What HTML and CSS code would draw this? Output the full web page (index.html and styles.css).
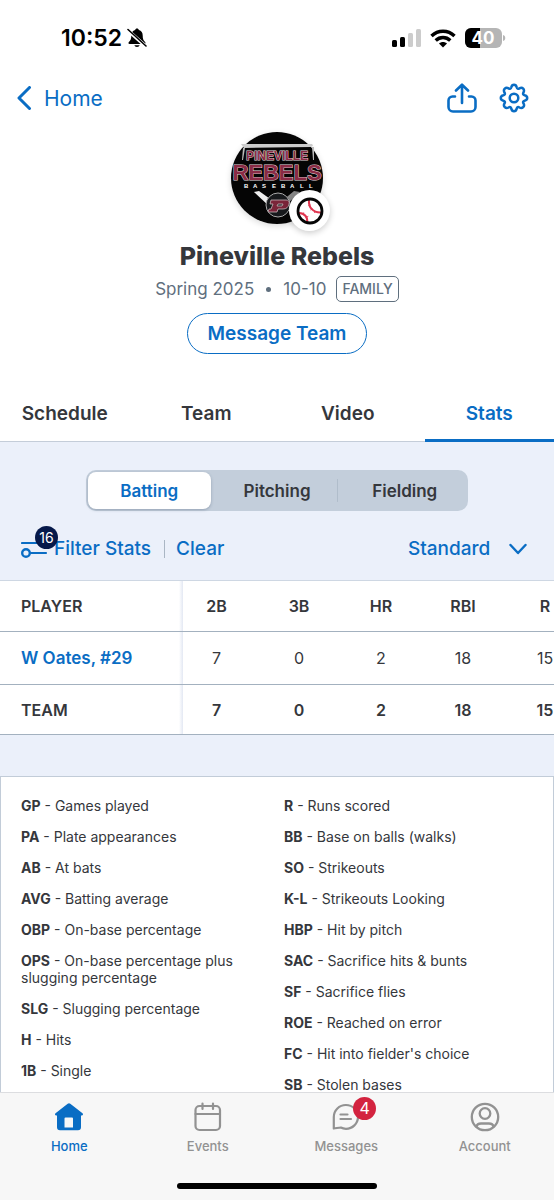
FILE: index.html
```
<!DOCTYPE html>
<html lang="en">
<head>
<meta charset="utf-8">
<meta name="viewport" content="width=device-width, initial-scale=1">
<title>Pineville Rebels - Stats</title>
<link rel="stylesheet" href="styles.css">
</head>
<body>
<div class="status-bar">
  <div class="status-left">
    <span class="clock">10:52</span>
    <svg class="bell" width="20" height="22" viewBox="0 0 20 22" aria-hidden="true">
      <path d="M10 1.500c-1 0-1.700.6-1.900 1.500C5.600 3.800 4.300 5.800 4.300 8.500c0 3.500-.7 4.900-2.400 6.600-.9 1-.4 2 .8 2h14.600c1.200 0 1.700-1 .8-2-1.700-1.700-2.400-3.100-2.400-6.600 0-2.700-1.300-4.700-3.800-5.500C11.700 2.100 11 1.500 10 1.500zM7.300 18.200a2.800 2.400 0 0 0 5.400 0z" fill="#000"/>
      <path d="M1 3.500l18 16" stroke="#fff" stroke-width="3.400"/>
      <path d="M1 2.500l18 16.500" stroke="#000" stroke-width="1.600" stroke-linecap="round"/>
    </svg>
  </div>
  <div class="status-right">
    <svg width="29" height="19" viewBox="0 0 29 19" aria-hidden="true">
      <rect x="0" y="11" width="5" height="7" rx="1.500" fill="#000"/>
      <rect x="8" y="8" width="5" height="10" rx="1.500" fill="#000"/>
      <rect x="16" y="4" width="5" height="14" rx="1.500" fill="#ccc"/>
      <rect x="24" y="0" width="5" height="18" rx="1.500" fill="#ccc"/>
    </svg>
    <svg width="26" height="19" viewBox="0 0 26 19" fill="none" stroke="#000" stroke-width="3.400" aria-hidden="true">
      <path d="M1.500 7C8 .6 18 .6 24.500 7"/>
      <path d="M5.700 11.500c4.200-4 10.400-4 14.600 0"/>
      <path d="M13 18.500l-4-4c2.400-2 5.600-2 8 0z" fill="#000" stroke="none"/>
    </svg>
    <svg width="41" height="20" viewBox="0 0 41 20" role="img" aria-label="Battery 40 percent">
      <rect x="0" y="0" width="37" height="20" rx="6" fill="#b5b5b5"/>
      <path d="M15 0H6a6 6 0 0 0-6 6v8a6 6 0 0 0 6 6h9z" fill="#000"/>
      <path d="M38 7c3 .6 3 5.400 0 6z" fill="#b5b5b5"/>
      <text class="battery-text" x="18" y="16" text-anchor="middle">40</text>
    </svg>
  </div>
</div>

<header class="nav-bar">
  <a class="back" href="#">
    <svg width="16" height="24" viewBox="0 0 16 24" fill="none" stroke="currentColor" stroke-width="3" stroke-linecap="round" stroke-linejoin="round" aria-hidden="true"><path d="M13.500 1.500L3 12l10.500 10.500"/></svg>
    Home
  </a>
  <div class="nav-actions">
    <button class="icon-button" type="button" aria-label="Share">
      <svg width="30" height="30" viewBox="0 0 30 30" fill="none" stroke="currentColor" stroke-width="2.600" stroke-linecap="round" stroke-linejoin="round" aria-hidden="true">
        <path d="M8 13.500H5.500a4 4 0 0 0-4 4v6.500a4.500 4.500 0 0 0 4.500 4.500h18a4.500 4.500 0 0 0 4.500-4.500v-6.500a4 4 0 0 0-4-4H22"/>
        <path d="M15 20V2M9 7.500L15 1.700l6 5.800"/>
      </svg>
    </button>
    <button class="icon-button" type="button" aria-label="Settings">
      <svg width="30" height="30" viewBox="0 0 30 30" fill="none" stroke="currentColor" stroke-width="2.500" stroke-linejoin="round" aria-hidden="true">
        <circle cx="15" cy="15" r="4.300"/>
        <path d="M15 1.800c1.800 0 2.400 1.200 2.700 2.500.4 1.500 1.400 1.900 2.700 1.100 1.200-.7 2.600-1 3.800.3s.9 2.600.3 3.800c-.8 1.300-.4 2.300 1.100 2.700 1.300.3 2.600.9 2.600 2.800s-1.300 2.400-2.600 2.700c-1.500.4-1.900 1.400-1.100 2.700.7 1.200 1 2.500-.3 3.800s-2.600 1-3.800.3c-1.300-.8-2.300-.4-2.700 1.100-.3 1.300-.9 2.600-2.700 2.600s-2.400-1.300-2.700-2.600c-.4-1.500-1.400-1.900-2.700-1.100-1.200.7-2.500 1-3.800-.3s-1-2.600-.3-3.800c.8-1.300.4-2.300-1.100-2.700-1.300-.3-2.600-.9-2.600-2.700s1.300-2.500 2.600-2.800c1.500-.4 1.900-1.400 1.100-2.700-.7-1.200-1-2.500.3-3.800s2.600-1 3.800-.3c1.300.8 2.300.4 2.700-1.100.3-1.300.9-2.500 2.700-2.500z"/>
      </svg>
    </button>
  </div>
</header>

<main class="content">
  <section class="team">
    <div class="crest">
      <svg width="92" height="92" viewBox="0 0 92 92" role="img" aria-label="Team logo">
        <circle cx="46" cy="46" r="46" fill="#050505"/>
        <path d="M10 12h71l1 1.500-2 1.500-67 1z" fill="#ccc"/>
        <path d="M12 16h2l-2 12h-1zM81 15h2v13h-1z" fill="#bbb"/>
        <text class="crest-name" x="46" y="28" text-anchor="middle">PINEVILLE</text>
        <text class="crest-mascot" x="46" y="48" text-anchor="middle">REBELS</text>
        <text class="crest-sport" x="13 22 31 41 50 59 69 78" y="56">BASEBALL</text>
        <path d="M23 60l5-1 14 10-3 6z" fill="#eee"/>
        <path d="M69 60l-6-1-12 10 3 5z" fill="#888"/>
        <circle cx="47" cy="73" r="12" fill="#17191c" stroke="#aaa" stroke-width="1"/>
        <path d="M40 68h15q4 0 3 4-1 5-6 5h-5l-1 3h-9l1-3h2l2-5h-3zM47 72h5l-1 2h-5z" fill="#7a2439" stroke="#c4b4b8" stroke-width=".8" fill-rule="evenodd"/>
      </svg>
      <span class="sport-badge">
        <svg width="28" height="28" viewBox="0 0 28 28" fill="none" aria-label="Baseball" role="img">
          <circle cx="14" cy="14" r="12" fill="#fff"/>
          <g stroke="#e0354f">
            <path d="M13 3c-.8 7.500 4.200 12.800 12 12.500M3 16c5.500.2 8.800 4 8.200 9.500" stroke-width="2"/>
            <path d="M12.500 8.500l2.200-.5M14.500 13l2-1.500M18.500 16l1-2M6.500 17.300l1.200-1.800M10.300 20.500l2-1.200" stroke-width="1"/>
          </g>
          <circle cx="14" cy="14" r="12" stroke="#060606" stroke-width="2.800"/>
        </svg>
      </span>
    </div>
    <h1 class="team-name">Pineville Rebels</h1>
    <div class="team-meta">
      <span>Spring 2025</span><span class="dot"></span><span>10-10</span><span class="role">FAMILY</span>
    </div>
    <button class="message-button" type="button">Message Team</button>
  </section>

  <nav class="tabs" aria-label="Team sections">
    <a class="tab" href="#">Schedule</a>
    <a class="tab" href="#">Team</a>
    <a class="tab" href="#">Video</a>
    <a class="tab tab-active" href="#" aria-current="page">Stats</a>
  </nav>

  <section class="stats">
    <div class="segments">
      <button class="segment segment-active" type="button" aria-pressed="true">Batting</button>
      <button class="segment segment-divided" type="button" aria-pressed="false">Pitching</button>
      <button class="segment" type="button" aria-pressed="false">Fielding</button>
    </div>

    <div class="filters">
      <button class="text-button filter-button" type="button">
        <svg width="33" height="18" viewBox="0 0 33 18" fill="none" stroke="currentColor" stroke-width="2.200" stroke-linecap="round" aria-hidden="true">
          <path d="M1 3h31M10 13h15"/><circle cx="5" cy="13" r="3.800" stroke-width="2.400"/>
        </svg>
        Filter Stats
        <span class="filter-count">16</span>
      </button>
      <span class="separator"></span>
      <button class="text-button" type="button">Clear</button>
      <div class="view-picker">
        <select class="view-select" aria-label="Stat view"><option>Standard</option></select>
        <svg class="chevron" width="18" height="12" viewBox="0 0 18 12" fill="none" stroke="currentColor" stroke-width="2.400" stroke-linecap="round" stroke-linejoin="round" aria-hidden="true"><path d="M1.500 2L9 10l7.500-8"/></svg>
      </div>
    </div>

    <div class="table-scroll">
      <table class="stat-table">
        <thead>
          <tr><th class="player" scope="col">PLAYER</th><th class="first" scope="col">2B</th><th scope="col">3B</th><th scope="col">HR</th><th scope="col">RBI</th><th scope="col">R</th></tr>
        </thead>
        <tbody>
          <tr><th class="player" scope="row"><a class="player-link" href="#">W Oates, #29</a></th><td class="first">7</td><td>0</td><td>2</td><td>18</td><td>15</td></tr>
        </tbody>
        <tfoot>
          <tr><th class="player" scope="row">TEAM</th><td class="first">7</td><td>0</td><td>2</td><td>18</td><td>15</td></tr>
        </tfoot>
      </table>
    </div>

    <div class="legend">
      <ul class="legend-column">
        <li><b>GP</b> - Games played</li>
        <li><b>PA</b> - Plate appearances</li>
        <li><b>AB</b> - At bats</li>
        <li><b>AVG</b> - Batting average</li>
        <li><b>OBP</b> - On-base percentage</li>
        <li><b>OPS</b> - On-base percentage plus slugging percentage</li>
        <li><b>SLG</b> - Slugging percentage</li>
        <li><b>H</b> - Hits</li>
        <li><b>1B</b> - Single</li>
      </ul>
      <ul class="legend-column">
        <li><b>R</b> - Runs scored</li>
        <li><b>BB</b> - Base on balls (walks)</li>
        <li><b>SO</b> - Strikeouts</li>
        <li><b>K-L</b> - Strikeouts Looking</li>
        <li><b>HBP</b> - Hit by pitch</li>
        <li><b>SAC</b> - Sacrifice hits &amp; bunts</li>
        <li><b>SF</b> - Sacrifice flies</li>
        <li><b>ROE</b> - Reached on error</li>
        <li><b>FC</b> - Hit into fielder's choice</li>
        <li><b>SB</b> - Stolen bases</li>
      </ul>
    </div>
  </section>
</main>

<footer class="app-bar">
  <nav class="app-tabs" aria-label="Main">
    <a class="app-tab app-tab-active" href="#" aria-current="page">
      <svg width="30" height="30" viewBox="0 0 30 30" fill="currentColor" aria-hidden="true"><path fill-rule="evenodd" d="M13.700 1.700a2 2 0 0 1 2.600 0l12.200 9.600c1 .9.500 2.200-.8 2.200H27v11.700a3 3 0 0 1-3 3H6a3 3 0 0 1-3-3V13.500h-.7c-1.300 0-1.800-1.300-.8-2.200zM11.500 15.500a1 1 0 0 0-1 1v9h8.500v-9a1 1 0 0 0-1-1z"/></svg>
      Home
    </a>
    <a class="app-tab" href="#">
      <svg width="30" height="30" viewBox="0 0 30 30" fill="none" stroke="currentColor" stroke-width="2.200" stroke-linecap="round" aria-hidden="true"><rect x="2.500" y="4" width="24.500" height="24" rx="4"/><path d="M2.500 12H27M9.500 1.500V7M20 1.500V7"/></svg>
      Events
    </a>
    <a class="app-tab" href="#">
      <span class="icon-wrap">
        <svg width="30" height="30" viewBox="0 0 30 30" fill="none" stroke="currentColor" stroke-width="2.200" stroke-linecap="round" stroke-linejoin="round" aria-hidden="true"><path d="M2.800 26.500V15A12 12 0 0 1 15 3a12 12 0 0 1 12 12 12 12 0 0 1-12 11.800c-2.200 0-3.600-.4-5.200-1.300-2.300.2-4.500.7-7 1z"/><path d="M9.500 12.500h7M9.500 17h10.500"/></svg>
        <span class="unread">4</span>
      </span>
      Messages
    </a>
    <a class="app-tab" href="#">
      <svg width="30" height="30" viewBox="0 0 30 30" fill="none" stroke="currentColor" stroke-width="2.300" stroke-linecap="round" aria-hidden="true"><circle cx="15" cy="15" r="13.200"/><circle cx="15" cy="11.500" r="5.300"/><path d="M6.500 24.500c.5-2.500 1.800-3 4.500-3h8c2.700 0 4 .5 4.500 3"/></svg>
      Account
    </a>
  </nav>
  <div class="home-indicator"></div>
</footer>
</body>
</html>
```
FILE: styles.css
```
:root {
  --blue: #0a6dc4;
  --ink: #35373c;
  --slate: #5f6f7e;
  --pale: #ebf0fa;
  --line: #a3b1bf;
}

* {
  box-sizing: border-box;
}

body {
  margin: 0;
  height: 100vh;
  display: flex;
  flex-direction: column;
  background: #fff;
  color: var(--ink);
  font-family: Inter, "Liberation Sans", sans-serif;
  font-size: 16px;
}

a {
  color: inherit;
  text-decoration: none;
}

button,
select {
  margin: 0;
  padding: 0;
  border: 0;
  background: none;
  color: inherit;
  font: inherit;
}

svg {
  display: block;
  flex: none;
}

.status-bar {
  display: flex;
  justify-content: space-between;
  align-items: center;
  height: 76px;
  padding: 0 48px 0 61px;
  color: #000;
}

.status-left {
  display: flex;
  align-items: center;
  gap: 5px;
}

.clock {
  font-size: 23px;
  font-weight: 600;
}

.status-right {
  display: flex;
  align-items: center;
  gap: 9px;
}

.battery-text {
  fill: #fff;
  font-size: 17px;
  font-weight: 700;
}

.nav-bar {
  display: flex;
  justify-content: space-between;
  align-items: center;
  height: 44px;
  padding: 0 25px 0 16px;
  color: var(--blue);
}

.back {
  display: flex;
  align-items: center;
  gap: 12px;
  font-size: 21px;
}

.nav-actions {
  display: flex;
  gap: 22px;
}

.content {
  flex: 1;
  min-height: 0;
  overflow: hidden;
}

.team {
  display: flex;
  flex-direction: column;
  align-items: center;
  padding: 12px 20px 31px;
}

.crest {
  position: relative;
  border-radius: 50%;
  box-shadow: 0 2px 6px rgba(0, 0, 0, 0.15);
}

.crest-name,
.crest-mascot {
  fill: #8a2b45;
  stroke: #e3d6da;
  stroke-width: 1px;
  paint-order: stroke;
  font-family: "Liberation Sans", sans-serif;
  font-weight: 700;
}

.crest-name {
  font-size: 12px;
}

.crest-mascot {
  font-size: 22px;
}

.crest-sport {
  fill: #fff;
  font-family: "Liberation Sans", sans-serif;
  font-size: 6px;
  font-weight: 700;
}

.sport-badge {
  position: absolute;
  right: -7px;
  bottom: -7px;
  display: flex;
  justify-content: center;
  align-items: center;
  width: 41px;
  height: 41px;
  border-radius: 50%;
  background: #fff;
  box-shadow: 0 2px 6px rgba(0, 0, 0, 0.2);
}

.team-name {
  margin: 16px 0 0;
  font-size: 25px;
  font-weight: 800;
  line-height: 32px;
}

.team-meta {
  display: flex;
  align-items: center;
  margin-top: 4px;
  color: var(--slate);
  font-size: 17px;
}

.dot {
  width: 5px;
  height: 5px;
  margin: 0 12px;
  border-radius: 50%;
  background: currentColor;
}

.role {
  margin-left: 10px;
  padding: 0 5px;
  border: 1px solid currentColor;
  border-radius: 5px;
  font-size: 14px;
  font-weight: 500;
  line-height: 24px;
}

.message-button {
  height: 41px;
  margin-top: 11px;
  padding: 0 20px;
  border: 1px solid var(--blue);
  border-radius: 21px;
  color: var(--blue);
  font-size: 19px;
  font-weight: 600;
}

.tabs {
  display: grid;
  grid-template-columns: repeat(4, 1fr);
  gap: 12px;
  height: 57px;
  border-bottom: 1px solid #c4cdd9;
}

.tab {
  display: flex;
  justify-content: center;
  align-items: center;
  margin-bottom: -1px;
  padding-top: 2px;
  border-bottom: 3px solid transparent;
  font-size: 19px;
  font-weight: 600;
}

.tab-active {
  border-color: var(--blue);
  color: var(--blue);
}

.stats {
  display: flex;
  flex-direction: column;
  padding-top: 28px;
  background: var(--pale);
}

.segments {
  align-self: center;
  display: grid;
  grid-template-columns: repeat(3, 1fr);
  gap: 5px;
  width: 69%;
  padding: 2px;
  border-radius: 10px;
  background: #c3cedb;
}

.segment {
  height: 37px;
  border-radius: 8px;
  font-size: 17px;
  font-weight: 600;
}

.segment-active {
  background: #fff;
  color: var(--blue);
  box-shadow: 0 1px 3px rgba(40, 60, 90, 0.3);
}

.segment-divided {
  background: linear-gradient(#b0bdcb, #b0bdcb) right center / 1px 23px no-repeat;
}

.filters {
  display: flex;
  align-items: center;
  height: 69px;
  padding: 6px 27px 0 21px;
  color: var(--blue);
  font-size: 19px;
  font-weight: 500;
}

.text-button {
  white-space: nowrap;
}

.filter-button {
  position: relative;
  display: flex;
  align-items: center;
}

.filter-count {
  position: absolute;
  left: 14px;
  top: -11px;
  width: 23px;
  height: 23px;
  border-radius: 50%;
  background: #06194a;
  color: #fff;
  font-size: 14px;
  font-weight: 400;
  line-height: 23px;
  text-align: center;
}

.separator {
  width: 1px;
  height: 18px;
  margin: 0 11px 0 13px;
  background: #aab6c4;
}

.view-picker {
  position: relative;
  margin-left: auto;
}

.view-select {
  appearance: none;
  padding-right: 36px;
}

.chevron {
  position: absolute;
  right: 0;
  top: 6px;
  pointer-events: none;
}

.table-scroll {
  overflow: hidden;
  border-top: 1px solid #ced7e3;
  background: #fff;
}

.stat-table {
  width: 586px;
  min-width: 100%;
  table-layout: fixed;
  border-collapse: separate;
  border-spacing: 0;
}

.stat-table th,
.stat-table td {
  height: 51px;
  padding: 0;
  border-bottom: 1px solid var(--line);
  text-align: center;
}

.stat-table tbody th,
.stat-table tbody td {
  height: 53px;
}

.stat-table tfoot th,
.stat-table tfoot td {
  height: 50px;
}

.stat-table th,
.stat-table tfoot td {
  font-weight: 600;
}

.stat-table .player {
  width: 183px;
  padding-left: 21px;
  background: linear-gradient(to left, #e3e8f3, #fff) right / 4px 100% no-repeat;
  text-align: left;
}

.stat-table .first {
  width: 75px;
  padding-right: 8px;
}

.player-link {
  color: var(--blue);
  font-size: 17px;
}

.legend {
  display: grid;
  grid-template-columns: 1fr 1fr;
  gap: 14px;
  margin-top: 41px;
  padding: 20px;
  border: 1px solid #c2ccd8;
  background: #fff;
}

.legend-column {
  display: flex;
  flex-direction: column;
  gap: 14px;
  margin: 0;
  padding: 0;
  list-style: none;
  font-size: 14px;
  line-height: 17px;
}

.app-bar {
  display: flex;
  flex-direction: column;
  align-items: center;
  border-top: 1px solid #dcdde0;
  background: #f7f7f7;
}

.app-tabs {
  align-self: stretch;
  display: grid;
  grid-template-columns: repeat(4, 1fr);
  padding-top: 9px;
}

.app-tab {
  display: flex;
  flex-direction: column;
  align-items: center;
  gap: 6px;
  color: #929292;
  font-size: 13px;
  font-weight: 500;
  line-height: 16px;
}

.app-tab-active {
  color: var(--blue);
}

.icon-wrap {
  position: relative;
}

.unread {
  position: absolute;
  left: 22px;
  top: -5px;
  width: 23px;
  height: 23px;
  border-radius: 50%;
  background: #d3233f;
  color: #fff;
  font-size: 16px;
  font-weight: 400;
  line-height: 23px;
  text-align: center;
}

.home-indicator {
  width: 36%;
  height: 6px;
  margin: 29px 0 11px;
  border-radius: 3px;
  background: #000;
}
```
